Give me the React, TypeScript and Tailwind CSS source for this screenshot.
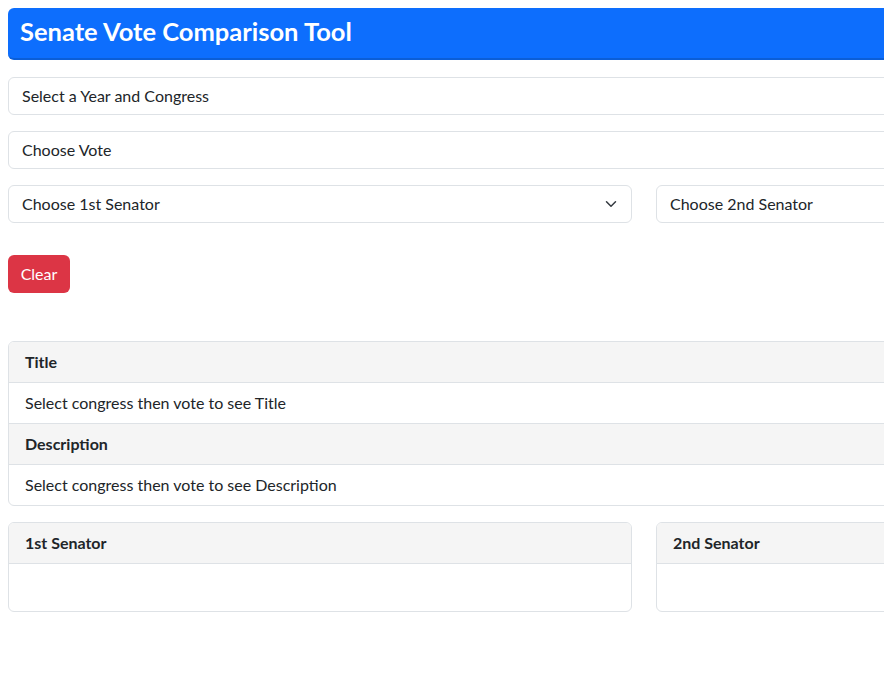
import React from 'react';

const font = { fontFamily: 'Lato, "Noto Sans", sans-serif' };

const Chevron: React.FC = () => (
  <svg width="16" height="12" viewBox="0 0 16 16" className="absolute right-[12px] top-1/2 -translate-y-1/2">
    <path d="M2 5l6 6 6-6" fill="none" stroke="#343a40" strokeWidth="2" strokeLinecap="round" strokeLinejoin="round" />
  </svg>
);

const Select: React.FC<{ label: string }> = ({ label }) => (
  <div className="relative h-[38px] w-full rounded-[6px] border border-[#dee2e6] bg-white pl-[13px] flex items-center text-[16px] text-[#212529]">
    {label}
    <Chevron />
  </div>
);

const HeadRow: React.FC<{ label: string }> = ({ label }) => (
  <div className="h-[41px] px-[16px] flex items-center bg-[#f5f5f5] border-b border-[#dee2e6] font-bold text-[16px] text-[#212529]">
    {label}
  </div>
);

const BodyRow: React.FC<{ label: string; last?: boolean }> = ({ label, last }) => (
  <div className={`px-[16px] flex items-center text-[16px] text-[#212529] ${last ? 'h-[40px]' : 'h-[41px] border-b border-[#dee2e6]'}`}>
    {label}
  </div>
);

export default function App() {
  return (
    <div className="w-[884px] h-[688px] overflow-hidden bg-white" style={font}>
      <div className="w-[1288px] px-[8px] pt-[8px]">
        <div className="h-[52px] rounded-[6px] bg-[#0d6efd] border-b-2 border-[#0b5ed7] px-[12px] flex items-center">
          <h1 className="text-[25.5px] font-bold text-white leading-none -mt-[2px]">Senate Vote Comparison Tool</h1>
        </div>

        <div className="mt-[17px] flex flex-col gap-[16px]">
          <Select label="Select a Year and Congress" />
          <Select label="Choose Vote" />
          <div className="flex gap-[24px]">
            <Select label="Choose 1st Senator" />
            <Select label="Choose 2nd Senator" />
          </div>
        </div>

        <button className="mt-[32px] h-[38px] w-[62px] rounded-[6px] bg-[#dc3545] text-white text-[16px]">Clear</button>

        <div className="mt-[48px] rounded-[6px] border border-[#dee2e6] overflow-hidden">
          <HeadRow label="Title" />
          <BodyRow label="Select congress then vote to see Title" />
          <HeadRow label="Description" />
          <BodyRow label="Select congress then vote to see Description" last />
        </div>

        <div className="mt-[16px] flex gap-[24px]">
          {['1st Senator', '2nd Senator'].map((s) => (
            <div key={s} className="flex-1 rounded-[6px] border border-[#dee2e6] overflow-hidden">
              <HeadRow label={s} />
              <div className="h-[47px]" />
            </div>
          ))}
        </div>
      </div>
    </div>
  );
}
